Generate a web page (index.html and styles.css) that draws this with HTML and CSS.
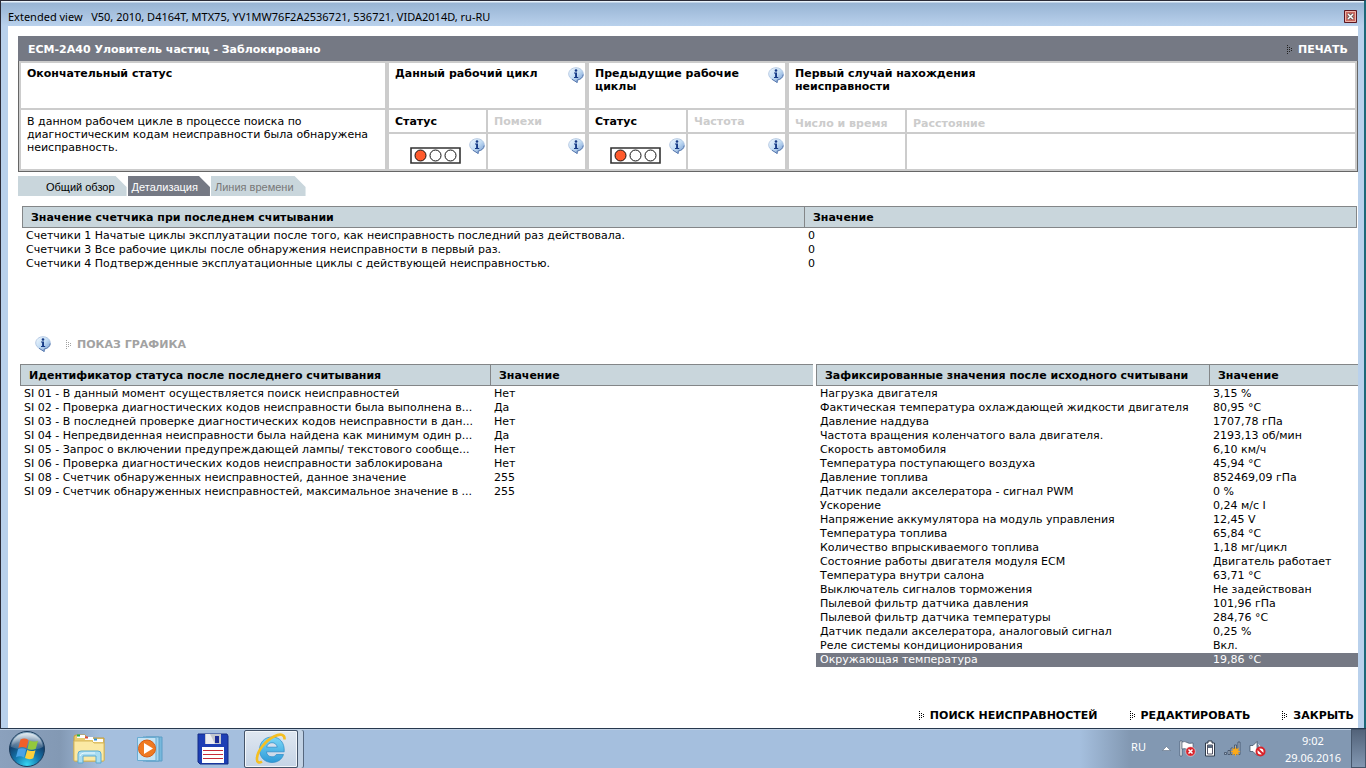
FILE: index.html
```html
<!DOCTYPE html>
<html lang="ru">
<head>
<meta charset="utf-8">
<title>Extended view</title>
<link rel="stylesheet" href="styles.css">
</head>
<body>
<svg class="defs" width="0" height="0" aria-hidden="true">
  <defs>
    <linearGradient id="bubble" x1="0" y1="0" x2="1" y2="1"><stop offset="0" stop-color="#f4faff"/><stop offset=".5" stop-color="#c2dcf4"/><stop offset="1" stop-color="#6b93cc"/></linearGradient>
    <symbol id="info" viewBox="0 0 16 16">
      <path d="M8 .7C3.900.7.7 3.500.7 7c0 2.700 2 5 4.800 5.800L9.200 15.500V13C12.700 12.600 15.300 10 15.300 7 15.300 3.500 12.100.7 8 .7z" fill="url(#bubble)" stroke="#a9c0de" stroke-width=".8"/>
      <path d="M4 12.300l5.200 3.200V13c3.500-.4 5.800-2.700 6-5.500" fill="none" stroke="#5577ae" stroke-width="1"/>
      <circle cx="8" cy="3.500" r="1.300" fill="#173a86"/><path d="M6 5.600h3v4.500h1.200v1H6v-1h1.100V6.600H6z" fill="#173a86"/>
    </symbol>
    <symbol id="lights" viewBox="0 0 51 17">
      <path d="M1 1h49v15H1z" fill="#fff" stroke="#333" stroke-width="1.600"/>
      <circle cx="10.500" cy="8.500" r="5.500" fill="#ff5a2c" stroke="#111"/><circle cx="25.500" cy="8.500" r="5.500" fill="#fff" stroke="#111"/><circle cx="40.500" cy="8.500" r="5.500" fill="#fff" stroke="#111"/>
    </symbol>
    <symbol id="dots" viewBox="0 0 5 9">
      <path d="M0 0h1v1H0zM0 2h1v1H0zM0 4h1v1H0zM0 6h1v1H0zM0 8h1v1H0zM2 2h1v1H2zM2 4h1v1H2zM2 6h1v1H2zM4 3h1v1H4zM4 5h1v1H4z" fill="currentColor"/>
    </symbol>
  </defs>
</svg>
<div class="screen">
  <div class="window">
    <header class="titlebar">
      <span class="title">Extended view &nbsp; V50, 2010, D4164T, MTX75, YV1MW76F2A2536721, 536721, VIDA2014D, ru-RU</span>
      <button class="close" aria-label="Close"><svg width="13" height="13" viewBox="0 0 13 13"><path d="M.5.5h12v12H.5z" fill="#c9685f" stroke="#5b1620"/><path d="M1.500 1.500h10v10h-10z" fill="none" stroke="#eeb4aa"/><path d="M4 4l5 5M9 4L4 9" stroke="#555" stroke-width="3"/><path d="M4 4l5 5M9 4L4 9" stroke="#fff" stroke-width="1.500"/></svg></button>
    </header>
    <main class="content">
      <div class="heading">
        <h1>ECM-2A40 Уловитель частиц - Заблокировано</h1>
        <button class="action print"><svg class="dots"><use href="#dots"/></svg>ПЕЧАТЬ</button>
      </div>
      <div class="status-frame">
      <table class="status">
        <colgroup><col class="c-final"><col class="c-half"><col class="c-half"><col class="c-half"><col class="c-half"><col class="c-date"><col></colgroup>
        <tr class="r-top">
          <th>Окончательный статус</th>
          <th colspan="2" class="group"><div class="with-info"><span>Данный рабочий цикл</span><svg class="info"><use href="#info"/></svg></div></th>
          <th colspan="2" class="group"><div class="with-info"><span>Предыдущие рабочие циклы</span><svg class="info"><use href="#info"/></svg></div></th>
          <th colspan="2" class="group">Первый случай нахождения<br>неисправности</th>
        </tr>
        <tr class="r-label">
          <td rowspan="2">В данном рабочем цикле в процессе поиска по диагностическим кодам неисправности была обнаружена неисправность.</td>
          <th class="group">Статус</th><th class="off">Помехи</th>
          <th class="group">Статус</th><th class="off">Частота</th>
          <th class="group off low">Число и время</th><th class="off low">Расстояние</th>
        </tr>
        <tr class="r-value">
          <td class="group"><div class="with-info"><svg class="lights"><use href="#lights"/></svg><svg class="info"><use href="#info"/></svg></div></td>
          <td><div class="with-info"><svg class="info"><use href="#info"/></svg></div></td>
          <td class="group"><div class="with-info"><svg class="lights"><use href="#lights"/></svg><svg class="info"><use href="#info"/></svg></div></td>
          <td><div class="with-info"><svg class="info"><use href="#info"/></svg></div></td>
          <td class="group"></td><td></td>
        </tr>
      </table>
      </div>
      <nav class="tabs">
        <button class="tab first">Общий обзор</button>
        <button class="tab active">Детализация</button>
        <button class="tab dim">Линия времени</button>
      </nav>
      <section class="counters">
        <table class="list">
          <colgroup><col class="c-counter"><col></colgroup>
          <thead><tr><th>Значение счетчика при последнем считывании</th><th>Значение</th></tr></thead>
          <tbody>
            <tr><td>Счетчики 1 Начатые циклы эксплуатации после того, как неисправность последний раз действовала.</td><td>0</td></tr>
            <tr><td>Счетчики 3 Все рабочие циклы после обнаружения неисправности в первый раз.</td><td>0</td></tr>
            <tr><td>Счетчики 4 Подтвержденные эксплуатационные циклы с действующей неисправностью.</td><td>0</td></tr>
          </tbody>
        </table>
      </section>
      <div class="chart-row"><svg class="info"><use href="#info"/></svg><button class="action" disabled><svg class="dots"><use href="#dots"/></svg>ПОКАЗ ГРАФИКА</button></div>
      <div class="lists">
        <table class="list left">
          <colgroup><col class="c-ident"><col></colgroup>
          <thead><tr><th>Идентификатор статуса после последнего считывания</th><th>Значение</th></tr></thead>
          <tbody>
            <tr><td>SI 01 - В данный момент осуществляется поиск неисправностей</td><td>Нет</td></tr>
            <tr><td>SI 02 - Проверка диагностических кодов неисправности была выполнена в...</td><td>Да</td></tr>
            <tr><td>SI 03 - В последней проверке диагностических кодов неисправности в дан...</td><td>Нет</td></tr>
            <tr><td>SI 04 - Непредвиденная неисправности была найдена как минимум один р...</td><td>Да</td></tr>
            <tr><td>SI 05 - Запрос о включении предупреждающей лампы/ текстового сообще...</td><td>Нет</td></tr>
            <tr><td>SI 06 - Проверка диагностических кодов неисправности заблокирована</td><td>Нет</td></tr>
            <tr><td>SI 08 - Счетчик обнаруженных неисправностей, данное значение</td><td>255</td></tr>
            <tr><td>SI 09 - Счетчик обнаруженных неисправностей, максимальное значение в ...</td><td>255</td></tr>
          </tbody>
        </table>
        <table class="list right">
          <colgroup><col class="c-frozen"><col></colgroup>
          <thead><tr><th>Зафиксированные значения после исходного считывани</th><th>Значение</th></tr></thead>
          <tbody>
            <tr><td>Нагрузка двигателя</td><td>3,15 %</td></tr>
            <tr><td>Фактическая температура охлаждающей жидкости двигателя</td><td>80,95 °C</td></tr>
            <tr><td>Давление наддува</td><td>1707,78 гПа</td></tr>
            <tr><td>Частота вращения коленчатого вала двигателя.</td><td>2193,13 об/мин</td></tr>
            <tr><td>Скорость автомобиля</td><td>6,10 км/ч</td></tr>
            <tr><td>Температура поступающего воздуха</td><td>45,94 °C</td></tr>
            <tr><td>Давление топлива</td><td>852469,09 гПа</td></tr>
            <tr><td>Датчик педали акселератора - сигнал PWM</td><td>0 %</td></tr>
            <tr><td>Ускорение</td><td>0,24 м/с I</td></tr>
            <tr><td>Напряжение аккумулятора на модуль управления</td><td>12,45 V</td></tr>
            <tr><td>Температура топлива</td><td>65,84 °C</td></tr>
            <tr><td>Количество впрыскиваемого топлива</td><td>1,18 мг/цикл</td></tr>
            <tr><td>Состояние работы двигателя модуля ECM</td><td>Двигатель работает</td></tr>
            <tr><td>Температура внутри салона</td><td>63,71 °C</td></tr>
            <tr><td>Выключатель сигналов торможения</td><td>Не задействован</td></tr>
            <tr><td>Пылевой фильтр датчика давления</td><td>101,96 гПа</td></tr>
            <tr><td>Пылевой фильтр датчика температуры</td><td>284,76 °C</td></tr>
            <tr><td>Датчик педали акселератора, аналоговый сигнал</td><td>0,25 %</td></tr>
            <tr><td>Реле системы кондиционирования</td><td>Вкл.</td></tr>
            <tr class="selected"><td>Окружающая температура</td><td>19,86 °C</td></tr>
          </tbody>
        </table>
      </div>
      <footer class="actions">
        <button class="action"><svg class="dots"><use href="#dots"/></svg>ПОИСК НЕИСПРАВНОСТЕЙ</button>
        <button class="action"><svg class="dots"><use href="#dots"/></svg>РЕДАКТИРОВАТЬ</button>
        <button class="action"><svg class="dots"><use href="#dots"/></svg>ЗАКРЫТЬ</button>
      </footer>
    </main>
  </div>
  <div class="taskbar">
    <button class="start" aria-label="Пуск">
      <svg width="38" height="38" viewBox="0 0 38 38">
        <defs><radialGradient id="orb" cx=".5" cy=".95" r=".9"><stop offset="0" stop-color="#35d6f2"/><stop offset=".4" stop-color="#1478ae"/><stop offset=".75" stop-color="#123f6c"/><stop offset="1" stop-color="#8fb0c8"/></radialGradient><linearGradient id="gloss" x1="0" y1="0" x2="0" y2="1"><stop offset="0" stop-color="#fff" stop-opacity=".75"/><stop offset="1" stop-color="#fff" stop-opacity=".1"/></linearGradient></defs>
        <circle cx="19" cy="19" r="17.500" fill="url(#orb)" stroke="#1c3c5c"/><path d="M3 17C4 8 11 3 19 3s15 5 16 14C26 22 12 20 3 17z" fill="url(#gloss)"/>
        <path d="M12.500 9.500q4-2 8 0.500l-2 8.200q-4-2.200-8.200-.2z" fill="#f0602a"/><path d="M21.500 10.500q4 2 8.500.2l-2.200 8q-4.200 2-8.300 0z" fill="#93c83d"/><path d="M10 19.300q4-2 8.200.2l-2.200 8q-4-2.200-8-.2z" fill="#4aa3e6"/><path d="M19.200 20q4 2 8.300.2l-2.200 8q-4.200 2-8.300-.2z" fill="#fcd03c"/>
      </svg>
    </button>
    <button class="app" aria-label="Проводник">
      <svg width="34" height="32" viewBox="0 0 34 32">
        <path d="M2 4q0-2 2-2h9l2 3h17v22q0 1-1 1H3q-1 0-1-1z" fill="#e9cc70" stroke="#c49d3c"/><path d="M5 2h8v3H5z" fill="#fff"/><path d="M5 1.500h3v2H5z" fill="#22b14c"/><path d="M13 4h8v3h-8z" fill="#fff"/><path d="M13 3.500h3v2h-3z" fill="#dd4b39"/><path d="M21 6h10v3H21z" fill="#fff"/><path d="M22 5.500h3v2h-3z" fill="#2d8fd8"/>
        <path d="M2 8h18l2 2h10v17q0 1-1 1H3q-1 0-1-1z" fill="#fbe9a4" stroke="#d8b95c"/>
        <path d="M6 30V21q0-3 3-3h17q3 0 3 3v9h-5v-7H11v7z" fill="#a9dcf1" stroke="#5aa9cf"/><path d="M8 23q1-3 4-3h11" fill="none" stroke="#eefbff"/>
      </svg>
    </button>
    <button class="app" aria-label="Проигрыватель">
      <svg width="32" height="30" viewBox="0 0 32 30"><path d="M11 3h16v24H11z" fill="#77b8dc" stroke="#5c9ec6"/><path d="M8 3h16v24H8z" fill="#a7d5ee" stroke="#5c9ec6"/><path d="M2.500 3.500H21v23H2.500z" fill="#c5e4f5" stroke="#69acd2"/><circle cx="12" cy="14.500" r="8.500" fill="#ef7a22" stroke="#d55c13"/><path d="M9 9l9 5.500L9 20z" fill="#fff"/></svg>
    </button>
    <button class="app" aria-label="Дискета">
      <svg width="32" height="32" viewBox="0 0 32 32"><path d="M1 1h29l1 2v28H3l-2-2z" fill="#1d3fb5" stroke="#142c85"/><path d="M8 1h16v10H8z" fill="#c3c7ce"/><path d="M9 1h4l5 10H9z" fill="#eceef2"/><path d="M18 3h4v7h-4z" fill="#1b2c96"/><path d="M5 14h22v16H5z" fill="#fff"/><path d="M6 17.500h20M6 21.500h20M6 25.500h20" stroke="#c72b3a" stroke-width="1.200"/></svg>
    </button>
    <button class="app open" aria-label="Internet Explorer">
      <svg width="32" height="32" viewBox="0 0 32 32"><defs><linearGradient id="ie" x1="0" y1="0" x2="0" y2="1"><stop offset="0" stop-color="#7bd7f7"/><stop offset="1" stop-color="#2d9ad8"/></linearGradient></defs><path d="M17 4C9.500 4 4.500 9.500 4.500 17S10 29.500 17 29.500c5.500 0 10-3 11.500-8h-7.200c-.8 1.500-2.300 2.300-4.300 2.300-3.200 0-5.300-2-5.500-5h17.700C29.800 9.800 25 4 17 4zm-5.300 10.200c.5-2.700 2.500-4.500 5.300-4.500s4.800 1.700 5.200 4.500z" fill="url(#ie)" stroke="#2a89c6" stroke-width=".7" fill-rule="evenodd"/><path d="M7 28.500C4 30.500 1.500 29.500 2 25 2.500 18 10 8 19 3.500 25 .5 30 1 29.500 6.500" fill="none" stroke="#f5bf22" stroke-width="2.600"/></svg>
    </button>
    <div class="tray">
      <span class="lang">RU</span>
      <svg class="up" width="9" height="5" viewBox="0 0 9 5"><path d="M.5 4.500L4.500.5l4 4z" fill="#fff" stroke="#4c5c70" stroke-width=".5"/></svg>
      <svg width="17" height="17" viewBox="0 0 17 17"><path d="M1 1h2v15H1z" fill="#fff" stroke="#38485c" stroke-width=".6"/><path d="M3 2q3-1 5 .5t6 .5v7q-4 1-6-.5T3 9z" fill="#fff" stroke="#38485c" stroke-width=".6"/><circle cx="11.500" cy="11.500" r="4.800" fill="#d9222a" stroke="#fff" stroke-width=".5"/><path d="M9.500 9.500l4 4M13.500 9.500l-4 4" stroke="#fff" stroke-width="1.500"/></svg>
      <svg width="12" height="17" viewBox="0 0 12 17"><path d="M4 1h4v2h2.500v13h-9V3H4z" fill="#fff" stroke="#2f3b4a"/><path d="M3.500 5h5v9h-5z" fill="#fff" stroke="#556"/><path d="M4 5h4v3H4z" fill="#5b6c80"/></svg>
      <svg width="17" height="17" viewBox="0 0 17 17"><path d="M.5 12.500h2v2h-2zM4 10.500h2v4H4zM7 8h2v6.500H7zM10.500 5h2v9.500h-2zM14 2h2v12.500h-2z" fill="#a9b7c7" stroke="#33435a" stroke-width=".7"/><path d="M11.500 6.500l1 2.500 2.500-1-1 2.500 2.500 1-2.500 1 1 2.500-2.500-1-1 2.500-1-2.500-2.500 1 1-2.500-2.500-1 2.500-1-1-2.500 2.500 1z" fill="#fba919"/></svg>
      <svg width="17" height="17" viewBox="0 0 17 17"><path d="M1 5.500h3L8 1.500v14l-4-4H1z" fill="#fff" stroke="#38485c" stroke-width=".7"/><path d="M9.500 4.500q1.500 1 1.500 3" fill="none" stroke="#fff"/><circle cx="11.500" cy="11.500" r="4" fill="#fff" stroke="#d9222a" stroke-width="2"/><path d="M8.700 8.700l5.600 5.600" stroke="#d9222a" stroke-width="2"/></svg>
      <div class="clock"><span>9:02</span><span>29.06.2016</span></div>
      <button class="desktop" aria-label="Свернуть все окна"></button>
    </div>
  </div>
</div>
</body>
</html>
```
FILE: styles.css
```css
* { box-sizing: border-box; }
body { margin: 0; font: 11px/13px "DejaVu Sans", Verdana, sans-serif; color: #000; }
button { margin: 0; padding: 0; border: 0; background: none; font: inherit; color: inherit; }
svg { display: block; flex: none; }
.defs { position: absolute; }

.screen { display: flex; flex-direction: column; min-height: 100vh; }
.window {
  flex: 1; display: flex; flex-direction: column;
  padding: 0 6px 0 7px;
  background: #b9d1ec;
  border: solid #2b2b38; border-width: 1px 2px 0 1px;
  border-right-color: #1c6878;
}
.titlebar {
  display: flex; align-items: center; justify-content: space-between;
  height: 25px; margin: 0 -6px 0 -7px; padding: 6px 7px 0;
  background: linear-gradient(#e8f1fa 0 1px, #98b4d4 2px, #b9d1ec);
}
.title { font: 11px/16px "Noto Sans", "Open Sans", sans-serif; }
.content { flex: 1; display: flex; flex-direction: column; background: #fff; padding: 10px 0 0 10px; }

.heading {
  display: flex; align-items: center; justify-content: space-between;
  height: 25px; padding: 1px 10px 0; background: #757984; color: #fff;
}
.heading h1 { margin: 0; font-size: 11px; line-height: 13px; }
.action { display: flex; align-items: center; gap: 6px; font-weight: bold; }
.action:disabled { color: #a2a2a2; }
.dots { width: 5px; height: 9px; }
.print .dots { color: #222; }

.info { width: 16px; height: 16px; }
.lights { width: 51px; height: 17px; }

.status-frame { border: solid #666; border-width: 0 1px 1px; }
.status { width: 100%; table-layout: fixed; border-collapse: collapse; }
.status th, .status td { padding: 4px 6px; border: 2px solid #ccc; text-align: left; vertical-align: top; }
.status .group { border-left-width: 4px; }
.status .r-label th, .status .r-label td { padding-top: 5px; }
.status .off { color: #ccc; }
.status .r-label .low { padding-top: 7px; padding-bottom: 2px; }
.c-final { width: 367px; }
.c-half { width: 100px; }
.c-date { width: 119px; }
.r-top { height: 47px; }
.r-label { height: 24px; }
.r-value { height: 37px; }
.with-info { display: flex; justify-content: flex-end; margin-right: -5px; }
.with-info span { flex: 1; }
.r-value .lights { margin: 9px 8px 0 0; }

.tabs { display: flex; gap: 1px; padding-top: 4px; }
.tab {
  height: 20px; padding: 2px 12px 0 4px; background: #c9d6dc;
  font: 11px/18px "Liberation Sans", Arial, sans-serif;
  clip-path: polygon(0 0, calc(100% - 11px) 0, 100% 11px, 100% 100%, 0 100%);
}
.tab.first { padding-left: 28px; }
.tab.active { background: #757984; color: #fff; }
.tab.dim { color: #777; }

.counters { padding: 10px 1px 0 4px; min-height: 140px; }
.list { width: 100%; table-layout: fixed; border-collapse: separate; border-spacing: 0; }
.list th {
  height: 22px; padding: 0 8px; text-align: left; background: #c9d6dc;
  border: 1px solid #838688; border-right-width: 0; white-space: nowrap; overflow: hidden;
}
.counters th:last-child { border-right-width: 1px; }
.list td { height: 14px; padding: 0 4px; line-height: 14px; white-space: nowrap; }
.list tbody tr:first-child td { padding-top: 1px; }
.list .selected td { background: #757984; color: #fff; }
.c-counter { width: 782px; }
.c-ident { width: 470px; }
.c-frozen { width: 393px; }

.chart-row { display: flex; align-items: center; gap: 15px; padding: 0 17px; height: 16px; }
.lists { display: flex; align-items: flex-start; gap: 3px; padding: 12px 0 0 2px; }
.left { flex: 793; width: auto; }
.right { flex: 542; width: auto; }
.actions { display: flex; justify-content: flex-end; gap: 32px; margin-top: auto; padding: 0 4px 6px 0; }

.taskbar {
  display: flex; align-items: center; height: 40px; padding-left: 8px;
  border-top: 1px solid #27384d;
  background: linear-gradient(90deg, #8ba1bd 0, #8399b4 60px, #a5bfde 100px, #a5bfde 1080px, #8298b2 1130px, #8298b2);
  box-shadow: inset 0 1px #bfd0e4;
}
.start { width: 38px; margin-right: 12px; }
.app { display: flex; align-items: center; justify-content: center; width: 62px; height: 38px; }
.app.open { width: 54px; border: 1px solid #44546a; border-radius: 2px; background: linear-gradient(#dfe7f1, #c5d4e6); box-shadow: inset 0 0 0 1px #f2f6fa, 5px 0 #c2d2e4, 6px 0 #56677e; }
.tray { display: flex; align-items: center; align-self: stretch; gap: 8px; margin-left: auto; color: #fff; font: 11px/17px "Noto Sans", sans-serif; }
.lang { margin: 0 8px 4px 0; }
.clock { display: flex; flex-direction: column; align-items: center; width: 72px; margin-left: 3px; }
.desktop { align-self: stretch; width: 15px; margin-left: -6px; border: 1px solid #46566b; background: linear-gradient(#53637a, #8297b1); }
```
